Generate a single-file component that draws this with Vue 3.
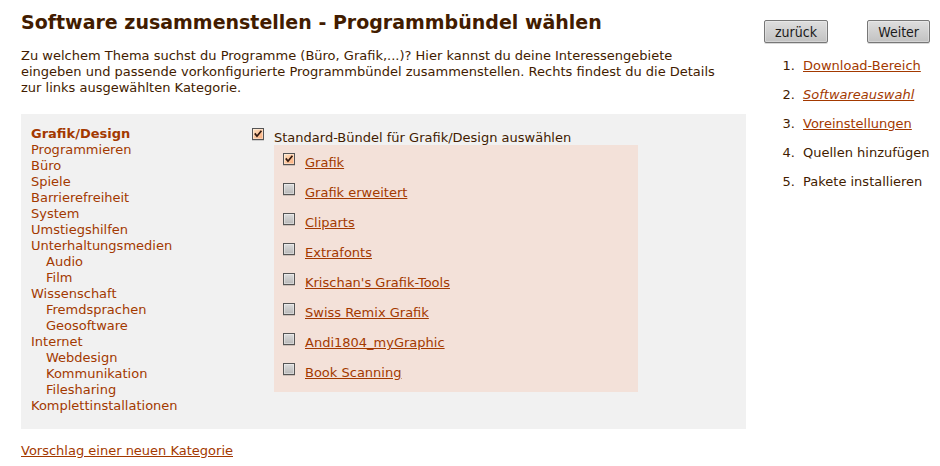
<script setup>
import { ref } from 'vue'

const categories = [
  { name: 'Grafik/Design', active: true },
  { name: 'Programmieren' },
  { name: 'Büro' },
  { name: 'Spiele' },
  { name: 'Barrierefreiheit' },
  { name: 'System' },
  { name: 'Umstiegshilfen' },
  { name: 'Unterhaltungsmedien', children: ['Audio', 'Film'] },
  { name: 'Wissenschaft', children: ['Fremdsprachen', 'Geosoftware'] },
  { name: 'Internet', children: ['Webdesign', 'Kommunikation', 'Filesharing'] },
  { name: 'Komplettinstallationen' },
]

const standard = ref(true)
const bundles = ref([
  { name: 'Grafik', checked: true },
  { name: 'Grafik erweitert', checked: false },
  { name: 'Cliparts', checked: false },
  { name: 'Extrafonts', checked: false },
  { name: "Krischan's Grafik-Tools", checked: false },
  { name: 'Swiss Remix Grafik', checked: false },
  { name: 'Andi1804_myGraphic', checked: false },
  { name: 'Book Scanning', checked: false },
])

const steps = [
  { name: 'Download-Bereich', link: true },
  { name: 'Softwareauswahl', link: true, current: true },
  { name: 'Voreinstellungen', link: true },
  { name: 'Quellen hinzufügen' },
  { name: 'Pakete installieren' },
]
</script>

<template>
  <div class="page">
    <main class="content">
      <h1>Software zusammenstellen - Programmbündel wählen</h1>
      <p class="intro">
        Zu welchem Thema suchst du Programme (Büro, Grafik,...)? Hier kannst du deine Interessengebiete<br />
        eingeben und passende vorkonfigurierte Programmbündel zusammenstellen. Rechts findest du die Details<br />
        zur links ausgewählten Kategorie.
      </p>

      <div class="panel">
        <ul class="categories">
          <li v-for="c in categories" :key="c.name">
            <a href="#" :class="{ active: c.active }">{{ c.name }}</a>
            <ul v-if="c.children" class="sub">
              <li v-for="s in c.children" :key="s"><a href="#">{{ s }}</a></li>
            </ul>
          </li>
        </ul>

        <div class="selection">
          <div class="standard">
            <span class="box">
              <input id="standard" v-model="standard" type="checkbox" />
              <svg v-if="standard" viewBox="0 0 12 12" aria-hidden="true"><path d="M2.8 5.4 5 8.2 9.4 2.8" /></svg>
            </span>
            <label for="standard">Standard-Bündel für Grafik/Design auswählen</label>
          </div>
          <ul class="bundles">
            <li v-for="(b, i) in bundles" :key="b.name">
              <span class="box">
                <input v-model="b.checked" type="checkbox" :aria-labelledby="'bundle-' + i" />
                <svg v-if="b.checked" viewBox="0 0 12 12" aria-hidden="true"><path d="M2.8 5.4 5 8.2 9.4 2.8" /></svg>
              </span>
              <a :id="'bundle-' + i" href="#">{{ b.name }}</a>
            </li>
          </ul>
        </div>
      </div>

      <a class="suggest" href="#">Vorschlag einer neuen Kategorie</a>
    </main>

    <aside class="wizard">
      <div class="buttons">
        <button type="button">zurück</button>
        <button type="button">Weiter</button>
      </div>
      <ol>
        <li v-for="s in steps" :key="s.name">
          <a v-if="s.link" href="#" :class="{ current: s.current }">{{ s.name }}</a>
          <template v-else>{{ s.name }}</template>
        </li>
      </ol>
    </aside>
  </div>
</template>

<style>
body {
  margin: 0;
  background: #fff;
}
</style>

<style scoped>
.page {
  display: grid;
  grid-template-columns: minmax(0, 1fr) 166px;
  gap: 18px;
  padding: 10px 10px 0 21px;
  color: #421c00;
  font: 13px/16px Verdana, "DejaVu Sans", sans-serif;
}
h1 {
  margin: 0 0 14px;
  font-size: 19px;
  line-height: 24px;
  white-space: nowrap;
}
.intro {
  margin: 0 0 18px;
  white-space: nowrap;
}
ul,
ol {
  margin: 0;
  padding: 0;
  list-style: none;
}
a {
  color: #a33900;
}
.panel {
  display: flex;
  padding: 12px 10px 15px;
  background: #f1f1f1;
}
.categories {
  width: 221px;
  flex: none;
}
.categories a {
  text-decoration: none;
}
.categories .active {
  font-weight: bold;
}
.sub {
  padding-left: 15px;
}
.selection {
  padding-top: 2px;
}
.standard {
  display: flex;
  gap: 10px;
}
.standard label {
  padding-top: 2px;
  line-height: 15px;
}
.bundles {
  width: 364px;
  box-sizing: border-box;
  margin-left: 22px;
  padding: 8px 9px 0;
  background: #f3e1d9;
}
.bundles li {
  display: flex;
  gap: 10px;
  height: 30px;
}
.bundles li:last-child {
  height: 29px;
}
.bundles a {
  margin-top: 2px;
}
.box {
  position: relative;
  width: 12px;
  height: 12px;
  flex: none;
}
.box input {
  display: block;
  appearance: none;
  box-sizing: border-box;
  width: 12px;
  height: 12px;
  margin: 0;
  border: 1px solid #555;
  background: linear-gradient(#dcdcdc, #b8b8b8);
  box-shadow: inset 0 0 0 1px rgba(255, 255, 255, 0.4), 0 1px 0 rgba(0, 0, 0, 0.15);
}
.box input:checked {
  background: linear-gradient(135deg, #fde3c4, #fbab78);
}
.box svg {
  position: absolute;
  inset: 0;
  pointer-events: none;
  fill: none;
  stroke: #32190f;
  stroke-width: 1.7;
}
.suggest {
  display: inline-block;
  margin-top: 14px;
}
.wizard {
  padding-top: 10px;
}
.buttons {
  display: flex;
  justify-content: space-between;
}
button {
  height: 23px;
  padding: 0 10px;
  border: 1px solid #777;
  border-radius: 2px;
  background: linear-gradient(#dedede, #c2c2c2);
  box-shadow: inset 0 0 0 1px rgba(255, 255, 255, 0.3), 0 1px 0 rgba(0, 0, 0, 0.15);
  color: #1a1a1a;
  font: 14px/20px "DejaVu Sans Condensed", "DejaVu Sans", sans-serif;
}
ol {
  padding: 15px 0 0 35px;
  list-style: decimal;
}
ol li {
  margin-bottom: 13px;
  padding-left: 4px;
  white-space: nowrap;
}
.current {
  font-style: italic;
}
</style>
